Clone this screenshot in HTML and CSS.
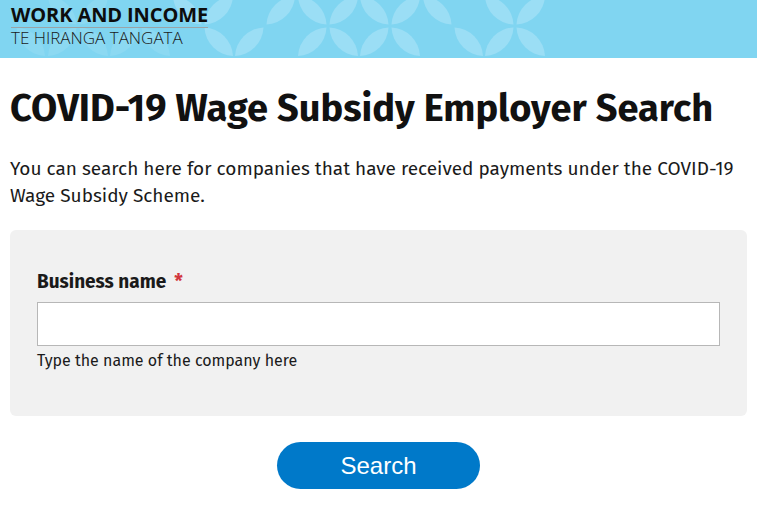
FILE: index.html
```html
<!DOCTYPE html>
<html lang="en">
<head>
<meta charset="utf-8">
<title>COVID-19 Wage Subsidy Employer Search</title>
<link rel="stylesheet" href="styles.css">
</head>
<body>
<header class="site-header">
  <svg class="pattern" width="757" height="58" viewBox="0 0 757 58" aria-hidden="true">
    <defs>
      <path id="p" d="M-1.5 -1.5 A30 30 0 0 1 -30 -30 A30 30 0 0 1 -1.5 -1.5Z"/>
    </defs>
    <g fill="#9bdef5">
      <g opacity="0.45">
        <g transform="translate(15 26)"><use href="#p" transform="scale(-1 -1)"/></g>
        <g transform="translate(78 26)"><use href="#p"/><use href="#p" transform="scale(-1 1)"/><use href="#p" transform="scale(1 -1)"/><use href="#p" transform="scale(-1 -1)"/></g>
        <g transform="translate(140 26)"><use href="#p" transform="scale(1 -1)"/><use href="#p" transform="scale(-1 -1)"/></g>
      </g>
      <g transform="translate(203 26)"><use href="#p"/><use href="#p" transform="scale(-1 1)"/><use href="#p" transform="scale(-1 -1)"/></g>
      <g transform="translate(265 26)"><use href="#p" transform="scale(-1 1)"/><use href="#p" transform="scale(1 -1)"/></g>
      <g transform="translate(328 26)"><use href="#p"/><use href="#p" transform="scale(-1 1)"/><use href="#p" transform="scale(1 -1)"/><use href="#p" transform="scale(-1 -1)"/></g>
      <g transform="translate(390 26)"><use href="#p"/><use href="#p" transform="scale(-1 1)"/><use href="#p" transform="scale(1 -1)"/><use href="#p" transform="scale(-1 -1)"/></g>
      <g transform="translate(453 26)"><use href="#p"/><use href="#p" transform="scale(-1 -1)"/></g>
      <g transform="translate(515 26)"><use href="#p"/><use href="#p" transform="scale(-1 1)"/><use href="#p" transform="scale(1 -1)"/><use href="#p" transform="scale(-1 -1)"/></g>
    </g>
  </svg>
  <div class="logo">
    <span class="logo-main">WORK AND INCOME</span>
    <span class="logo-sub">TE HIRANGA TANGATA</span>
  </div>
</header>
<main class="content">
  <h1 class="title">COVID-19 Wage Subsidy Employer Search</h1>
  <p class="intro">You can search here for companies that have received payments under the COVID-19 Wage Subsidy Scheme.</p>
  <form class="search-form">
    <div class="panel">
      <label class="field-label" for="business">Business name <span class="required">*</span></label>
      <input class="field-input" id="business" type="text">
      <p class="field-hint">Type the name of the company here</p>
    </div>
    <div class="actions">
      <button class="search-button" type="button">Search</button>
    </div>
  </form>
</main>
</body>
</html>
```

FILE: styles.css
```css
* { box-sizing: border-box; }

body {
  margin: 0;
  background: #ffffff;
  color: #1a1a1a;
  font-family: "Fira Sans", "Open Sans", "Noto Sans", sans-serif;
}

.site-header {
  position: relative;
  height: 58px;
  background: #80d5f1;
  overflow: hidden;
}

.pattern {
  position: absolute;
  left: 0;
  top: 0;
}

.logo {
  position: relative;
  display: inline-flex;
  flex-direction: column;
  padding: 4px 0 0 11px;
}

.logo-main {
  font-family: "Open Sans", sans-serif;
  font-weight: 700;
  font-size: 20px;
  line-height: 22px;
  color: #0d0d0d;
  letter-spacing: -0.1px;
  border-bottom: 1px solid #9aa4a8;
  padding-bottom: 1px;
}

.logo-sub {
  font-family: "Open Sans", sans-serif;
  font-weight: 300;
  font-size: 17px;
  line-height: 20px;
  color: #1a1a1a;
}

.content {
  padding: 0 10px;
}

.title {
  margin: 28px 0 0;
  font-size: 38px;
  line-height: 44px;
  font-weight: 700;
  color: #111;
}

.intro {
  margin: 25px 0 0;
  font-size: 19px;
  line-height: 27px;
  color: #1a1a1a;
}

.search-form {
  margin-top: 21px;
}

.panel {
  background: #f1f1f1;
  border-radius: 6px;
  padding: 40px 27px 44px;
}

.field-label {
  display: flex;
  gap: 8px;
  font-size: 19px;
  font-weight: 700;
  line-height: 24px;
  color: #1a1a1a;
}

.required {
  color: #d2363d;
}

.field-input {
  display: block;
  width: 100%;
  height: 44px;
  margin-top: 8px;
  border: 1px solid #b7b7b7;
  background: #fff;
  font-size: 16px;
}

.field-hint {
  margin: 4px 0 0;
  font-size: 16px;
  line-height: 22px;
  color: #1a1a1a;
}

.actions {
  display: flex;
  justify-content: center;
  margin-top: 26px;
}

.search-button {
  width: 203px;
  height: 47px;
  border: none;
  border-radius: 24px;
  background: #0079c9;
  color: #fff;
  font-family: "Liberation Sans", Arial, sans-serif;
  font-size: 24px;
  padding: 0;
}
```
